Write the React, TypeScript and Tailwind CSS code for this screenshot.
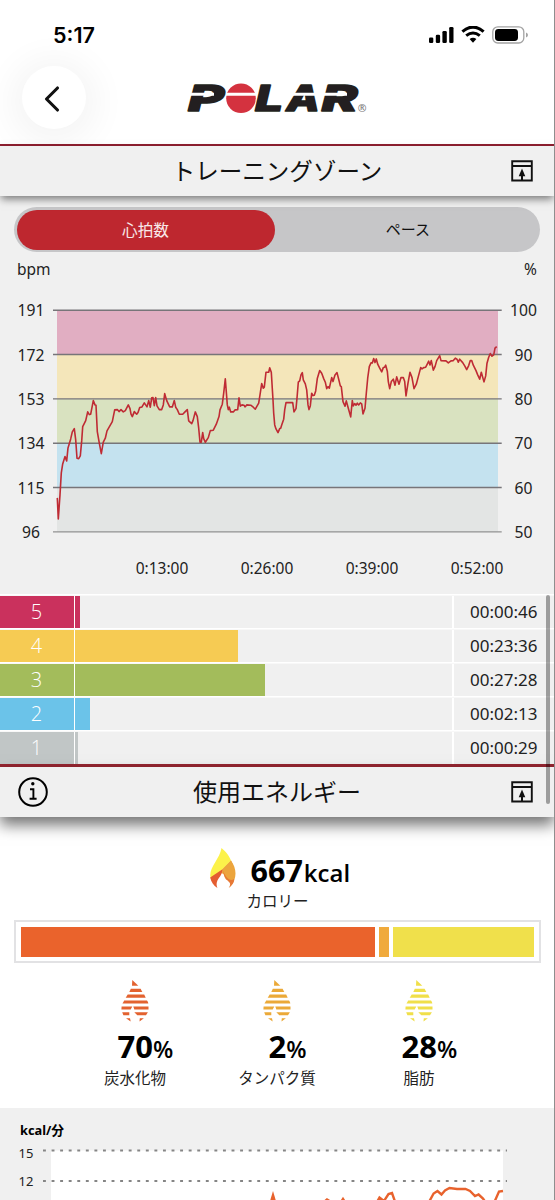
import * as React from "react"
import { ChevronLeft } from "lucide-react"

const HR_LINE =
    "57.3,498 58.3,519 60,495 61.3,473 62.7,464 65,456.7 66.7,461 68,448 70.7,439 72.3,432 74.3,428.7 75.7,440 77,458.3 78.7,458.7 80.3,456 81.7,441 82.7,426.7 85.7,420.7 87.7,412 89.3,414.7 90.7,414.3 93.3,400.7 95,405 96,405.3 97.3,431.7 99.3,443.3 101.3,453.7 103.3,442.3 105.3,438.3 107,431 112.3,421.7 114.7,410 117.3,409.7 119,411.7 121,409.7 123.3,412 125.3,410.7 128.3,405 130,408.7 131,414.3 132.3,416.7 134.3,411.7 136.7,414.3 138,412.7 139.7,407.7 142,407 144.3,403 147,407 148.7,400.7 150.3,407.3 151.7,398 153,397.7 154.3,405.7 155.7,397.7 157,406 159.3,409.7 161.7,409.7 163.3,405 164.7,393.7 166.7,400.7 169.7,407 172.3,407 174.3,400.7 175.7,407.3 177.3,409.7 179.3,414.3 182.7,414.3 185,412 187.3,409.7 188.7,421 191.7,423.7 193,420.7 195.3,412 197.3,416.7 198.7,428.3 200,442.3 201.3,442.3 202.7,432.7 203.7,438.7 205.3,442.3 208.3,437.7 210.3,430.7 213.3,430.3 216.3,424.3 219,416.7 220,410 222.3,404.3 223.7,393.3 225.3,379 227.3,405 228.3,409.7 229.3,407.3 230.7,412 233.3,412 235,410 237.7,409.7 239,398 240.3,406.3 242,405 244,405.3 245,407 246.7,405 250.7,405.3 253.3,407.3 255.3,409.3 258.7,403.3 260,395 261.7,383.7 263.3,388.3 264.3,387.3 266,372.3 268.7,372.3 269.7,368 271.3,372.3 273,400 273.7,413.3 274.7,425 276,429 278,432.7 279.7,428.7 280.7,428.3 281.7,425 283.7,419.3 284.7,410 286,402.7 292.7,402.7 294,412 296,408.7 297,398.3 298.3,382.3 299.7,381 301,375 302.3,372.7 303.3,380 305.3,384 306.7,390 308,405 309,409.7 310.3,406 311.7,393.3 313,395.7 314.3,395.3 315.7,391 317.3,378.7 319.7,370.7 321.7,373.3 323.7,378.7 325.3,382.3 326.7,388.7 328,386.7 329.3,388.3 331.7,377.7 333,381.7 335,375 337,372.7 338.7,379.3 340.3,386 341.3,386.7 343,401.7 345,406.3 346.3,401 348.3,408.3 350.7,417 352.3,400.7 353.3,406 354.7,403.7 356,405.3 357.3,403.3 358.7,405 360.3,403 361.7,404 363,414 365,408.3 366.3,393.3 367.7,378.3 369.3,366.7 371,363 372.3,363 373.7,358.7 375,362.7 376.3,359 377.7,364.3 379.7,368.3 381.7,372 383.3,367.7 384.7,367.3 385.7,365.3 387.3,371.3 388.3,381.7 389.7,388.7 391.3,381.7 393.3,379.3 395,385.3 396.7,377 399,384.3 401,377.7 403.3,377.7 404.7,381.7 406,396 408,383.3 410,372.3 412,377.7 414,388.7 416.3,384.3 418.3,376.7 420.7,367.7 422,369 423.7,367.7 425.7,367.3 427,364.7 428.7,361.3 430,365 431.3,360.7 433.3,370.3 435,366.7 436.7,360.7 439.7,355.7 441,360.7 446,361 448.3,363 451,361 453.3,360.7 455.3,358.3 457,359.3 458.3,362.3 459.7,359.3 462.7,362.7 464.7,366 466.7,369.7 468.7,365.7 470.3,360.7 471.7,360.7 473.3,365.3 476,370.7 477.7,375 479.7,379.3 481.3,372.3 484,382 485.7,376 487,363.3 488.7,357.3 490.3,353.7 492,356.3 493.7,355 495,348.3 496.7,346.7"

const KCAL_LINE =
    "429,1202 433.6,1193.5 437.5,1191 441.5,1194.5 445,1190.5 449.5,1188 457,1189 465.5,1189 470,1191 475,1196 478.6,1194.5 483,1198.5 486,1203 494,1203 499,1191.5 503,1191"

const BANDS = ["#e1aec2", "#f4e6ba", "#d9e2c0", "#c4e2ef", "#e3e5e4"]

const ZONES = [
    { zone: 5, time: "00:00:46", width: 5, bg: "bg-[#ca315d]" },
    { zone: 4, time: "00:23:36", width: 163, bg: "bg-[#f6cb53]" },
    { zone: 3, time: "00:27:28", width: 190, bg: "bg-[#a3bc5b]" },
    { zone: 2, time: "00:02:13", width: 15, bg: "bg-[#6bc3e9]" },
    { zone: 1, time: "00:00:29", width: 3, bg: "bg-[#c1c6c6]" },
]

const NUTRIENTS = [
    { label: "炭水化物", value: 70, color: "#e3622f" },
    { label: "タンパク質", value: 2, color: "#eba938" },
    { label: "脂肪", value: 28, color: "#f0df49" },
]

function StatusBar() {
    return (
        <div className="flex h-[66px] items-start justify-between pt-[22px] pr-[26px] pl-[53px]">
            <span className="font-['Inter'] text-[21.500px] leading-[26px] font-semibold text-black">5:17</span>
            <svg width="99" height="18" viewBox="0 0 99 18" className="mt-1">
                <rect x="0" y="11.4" width="4.3" height="5.6" rx="1.3" />
                <rect x="6.8" y="8.7" width="4.3" height="8.3" rx="1.3" />
                <rect x="13.4" y="5" width="4.4" height="12" rx="1.3" />
                <rect x="20.2" y="1" width="4.3" height="16" rx="1.3" />
                <path d="M33.4 5.6 Q44 -3.4 54.6 5.6" fill="none" stroke="#000" strokeWidth="3.1" />
                <path d="M37.2 9.7 Q44 4.2 50.8 9.7" fill="none" stroke="#000" strokeWidth="3" />
                <path d="M40.6 13 Q44 10.4 47.4 13 L44 16.7 Z" />
                <rect x="63.8" y="0.8" width="31" height="16.2" rx="5" fill="none" stroke="#a3a3a3" strokeWidth="1.3" />
                <rect x="66" y="3" width="23" height="12" rx="3.4" />
                <path d="M97 6.5 Q99 7.4 99 9 Q99 10.6 97 11.4 Z" fill="#a3a3a3" />
            </svg>
        </div>
    )
}

function PolarLogo() {
    const letters = {
        fontFamily: "Inter",
        fontWeight: 800,
        fontStyle: "italic",
        fontSize: 36,
        fill: "#231f20",
        stroke: "#231f20",
        strokeWidth: 1.6,
        strokeLinejoin: "round" as const,
        lengthAdjust: "spacingAndGlyphs",
    }
    return (
        <svg width="190" height="60" viewBox="182 68 190 60">
            <text x="188" y="111" textLength="36" {...letters}>P</text>
            <text x="255" y="111" textLength="28" {...letters}>L</text>
            <text x="286.500" y="111" textLength="33" {...letters}>A</text>
            <text x="321.500" y="111" textLength="36" {...letters}>R</text>
            <circle cx="241" cy="98.3" r="14.8" fill="#d4323f" />
            <path d="M189 94.2 H214 M226 94.2 H257 M286 94.2 H319 M322 94.2 H347" stroke="#fff" strokeWidth="3" />
            <text x="357.8" y="111.6" fontSize="10.5" fontFamily="Noto Sans" fill="#777">®</text>
        </svg>
    )
}

function PopupIcon() {
    return (
        <svg width="22" height="22" viewBox="0 0 22 22" fill="none" stroke="#111" className="absolute right-[21px]">
            <path d="M1.2 1.2 H20.8 V20.500 H1.2 Z M1.2 6 H20.8" strokeWidth="1.9" />
            <path d="M11 20 V14" strokeWidth="2" />
            <path d="M11 8.4 L14.3 16.2 H7.7 Z" fill="#111" stroke="none" />
        </svg>
    )
}

function InfoIcon() {
    return (
        <svg width="30" height="30" viewBox="0 0 30 30" fill="none" stroke="#000" strokeWidth="2" className="absolute left-[18px]">
            <circle cx="15" cy="15" r="13.8" />
            <path d="M12 12.3 H15.4 V21.6 M11.6 21.8 H18.6" strokeWidth="1.9" />
            <circle cx="14.8" cy="6.8" r="1.7" fill="#000" stroke="none" />
        </svg>
    )
}

function HeartRateChart() {
    return (
        <div className="flex h-[266px] text-[15.7px] text-[#222]">
            <div className="flex w-[53px] flex-col pt-px pl-[17px]">
                {[191, 172, 153, 134, 115, 96].map((v) => (
                    <span key={v} className="flex h-[44.3px] w-7 shrink-0 items-center justify-center">{v}</span>
                ))}
            </div>
            <svg width="449" height="266" viewBox="53 288.1 449 266" fill="none">
                {BANDS.map((color, i) => (
                    <rect key={color} x="57" y={310.3 + i * 44.34} width="441" height="44.34" fill={color} />
                ))}
                {[0, 1, 2, 3, 4, 5].map((i) => (
                    <path key={i} d={`M53 ${310.3 + i * 44.34} H501.7`} stroke={i === 5 ? "#929292" : "#777579"} strokeWidth="1.4" />
                ))}
                <polyline points={HR_LINE} stroke="#bf2b34" strokeWidth="1.6" strokeLinejoin="round" />
            </svg>
            <div className="flex flex-col pt-px pl-2">
                {[100, 90, 80, 70, 60, 50].map((v) => (
                    <span key={v} className="flex h-[44.3px] w-[27px] shrink-0 items-center justify-center">{v}</span>
                ))}
            </div>
        </div>
    )
}

function ZoneRow({ zone, time, width, bg }: (typeof ZONES)[0]) {
    return (
        <div className="flex h-[34.1px] pt-[1.5px] text-[#222] shadow-[inset_0_1.5px_0_#fff]">
            <div className={`flex w-[73.7px] items-center justify-center text-[20px] text-white ${bg}`}>
                <span className="pr-px font-['Open_Sans'] font-light">{zone}</span>
            </div>
            <div className="flex w-[380px] border-r-2 border-white bg-transparent pl-[1.3px] shadow-[inset_1.500px_0_0_#fff]">
                <div className={bg} style={{ width }} />
            </div>
            <div className="flex flex-1 items-center justify-end pr-[16.500px] text-[17px]">{time}</div>
        </div>
    )
}

function Flame() {
    return (
        <svg width="28" height="42" viewBox="0 0 28 42">
            <path d="M12.5 0 C18 5 20 7.500 22 12.500 L5.500 29.500 L2 31.500 C-2 21 10.500 12 12.500 0 Z" fill="#fcf24a" />
            <path d="M22 12.500 C28 21 28.500 31 20.500 39.800 C24 34 20 31 17.500 32 C14.500 29 15 24 13.500 21.200 Z" fill="#eca53d" />
            <path d="M22 12.500 L13.500 21.200 L8 27 C14 23 15 26 18 31 H25 Q27 22 22 12.500 Z" fill="#eca53d" />
            <path d="M13.500 21.200 L1.200 29.600 C2.200 34 4.500 38 8.400 40 C6.500 35 8.500 32 11 28.500 C13 26 13 23 13.500 21.200 Z" fill="#e45d31" />
            <path d="M13.500 21.200 C15 26 14.500 29 20.500 34.500 C22 36.500 20.500 38.500 19.700 40 C25 36 25.500 32 25 31 C21 34 16 29 13.500 21.200 Z" fill="#e77835" />
        </svg>
    )
}

// leaf-like flame cut into horizontal stripes
function StripedFlame({ color }: { color: string }) {
    return (
        <svg width="28" height="42" viewBox="0 0 28 42" fill={color}>
            <path d="M11.300 0 L17.300 5.800 H11 Z" />
            <path d="M9.800 8.700 H19.600 L21.300 11.900 H8.300 Z" />
            <path d="M6.700 14.500 H23.200 L24.700 17.700 H4.700 Z" />
            <path d="M3.200 20.400 H26 Q27.200 22 27.300 23.600 H1.500 Z" />
            <path d="M0.600 26.500 H11.300 L9.700 29.600 H0.400 Z M12.300 26.500 H27.500 V29.600 H13.300 Z" />
            <path d="M1.200 32.200 H8.300 V35.300 H2.400 Z M13.300 32.200 H26.900 L25 35.300 H16.300 Z" />
            <path d="M5 38.200 H9 L9.700 41.500 Z M18.800 38.200 H22.900 L18.500 41.500 Z" />
        </svg>
    )
}

function EnergySection() {
    return (
        <section className="h-[291.500px] bg-white">
            <div className="flex h-[103.5px] items-start pt-[31px] pl-[208.500px]">
                <Flame />
                <div className="-ml-[9px] flex w-[140px] flex-col pl-[23px]">
                    <div className="h-[44px] leading-[44px] whitespace-nowrap text-black">
                        <span className="text-[30.5px] font-bold">667</span>
                        <span className="ml-px font-['Open_Sans'] text-[24px] font-semibold">kcal</span>
                    </div>
                    <span className="-ml-1 text-[15.5px] leading-[18px] text-[#222]">カロリー</span>
                </div>
            </div>
            <div className="mx-[14px] flex h-[43px] w-[526.500px] gap-[3.5px] border-2 border-[#e2e2e4] p-[4.500px]">
                <div className="w-[354.500px] bg-[#ea632c]" />
                <div className="w-[10.500px] bg-[#f0aa3c]" />
                <div className="flex-1 bg-[#f0e04b]" />
            </div>
            <div className="flex pt-[17px] pl-[64px]">
                {NUTRIENTS.map((n) => (
                    <div key={n.label} className="flex w-[142px] flex-col items-center">
                        <StripedFlame color={n.color} />
                        <div className="h-[47px] pl-[21px] leading-[49px] text-black">
                            <span className="text-[31px] font-bold">{n.value}</span>
                            <span className="font-['Open_Sans'] text-[23.500px] font-semibold">%</span>
                        </div>
                        <span className="text-[15.5px] leading-[18px] text-[#222]">{n.label}</span>
                    </div>
                ))}
            </div>
        </section>
    )
}

function EnergyChart() {
    return (
        <section className="h-[91.500px] overflow-hidden bg-[#f0f0f0] pt-3">
            <p className="pl-5 text-[12.800px] leading-5 font-bold text-black">kcal/分</p>
            <div className="flex">
                <div className="flex w-[43px] flex-col pl-[18.500px] text-[13px] text-[#222]">
                    <span className="flex h-[27px] items-center">15</span>
                    <span className="flex h-[30px] items-center">12</span>
                </div>
                <svg width="465" height="60" viewBox="43 1140 465 60" fill="none">
                    <rect x="51" y="1150.500" width="452" height="60" fill="#fff" />
                    <path d="M43 1150.500 H507 M43 1181 H507" stroke="#858585" strokeWidth="1.900" strokeDasharray="2.900 5.670" />
                    <path d="M270 1201 L273 1191 L276 1201 Z" fill="#e8622d" />
                    <g stroke="#e8622d" strokeWidth="2.400">
                        <polyline points="324,1202 327,1199.500 331,1202" />
                        <polyline points="341,1202 343,1199 345,1202" />
                        <polyline points="377,1202 379.500,1197.500 384,1201 388.500,1194 392,1193 395.500,1203" />
                        <polyline points={KCAL_LINE} />
                    </g>
                </svg>
            </div>
        </section>
    )
}

export default function App() {
    return (
        <div className="relative h-[1200px] w-[555px] overflow-hidden border-r border-[#8e8e8e] bg-[#f0f0f0] font-['Noto_Sans','Noto_Sans_CJK_JP',sans-serif]">
            <header className="h-[143.500px] bg-white">
                <StatusBar />
                <div className="flex items-center pl-[22px]">
                    <button className="relative flex h-[63px] w-[64px] items-center justify-center rounded-full bg-white shadow-[0_4px_34px_12px_rgba(0,0,0,0.045)]">
                        <ChevronLeft className="mt-0.5 mr-1 h-[44px] w-[44px] text-[#111]" strokeWidth={1.7} />
                    </button>
                    <div className="ml-[95.500px]">
                        <PolarLogo />
                    </div>
                </div>
            </header>

            {/* Training zones */}
            <div className="relative z-10 flex h-[52px] items-center justify-center border-t-[2.500px] border-[#8f1f30] bg-[#f0f0f0] text-[23.500px] text-[#111]">
                <div className="absolute inset-0 -z-10 shadow-[0_4px_8px_-1px_rgba(0,0,0,0.5)]" />
                <h2 className="pt-0.5">トレーニングゾーン</h2>
                <PopupIcon />
            </div>

            <div className="mt-[11.500px] ml-[14px] flex h-[45px] w-[526px] items-center rounded-full bg-[#c6c6c8] px-[2.500px] text-[15.7px]">
                <div className="flex h-[40px] w-[258px] items-center justify-center rounded-full bg-[#be272f] pt-0.5 text-white/90">心拍数</div>
                <div className="flex flex-1 items-center justify-center pl-1 text-[15px] text-[#111]">ペース</div>
            </div>

            <div className="flex h-[36px] justify-between pt-[5px] pr-[17px] pl-[17px] text-[15.500px] leading-6 text-[#222]">
                <span>bpm</span>
                <span>%</span>
            </div>
            <HeartRateChart />
            <div className="flex h-[40px] pl-[109.500px] text-[15.5px] leading-7 text-[#222]">
                {["0:13:00", "0:26:00", "0:39:00", "0:52:00"].map((t) => (
                    <span key={t} className="w-[105px] text-center">{t}</span>
                ))}
            </div>

            <div className="h-[170px] overflow-hidden">
                {ZONES.map((z) => (
                    <ZoneRow key={z.zone} {...z} />
                ))}
            </div>

            {/* Energy used */}
            <div className="relative z-10 flex h-[52.500px] items-center justify-center border-t-[3px] border-[#952530] bg-[#f0f0f0] text-[24px] text-[#111]">
                <div className="absolute inset-0 -z-10 shadow-[0_8px_14px_0px_rgba(0,0,0,0.55)]" />
                <InfoIcon />
                <h2>使用エネルギー</h2>
                <PopupIcon />
            </div>
            <EnergySection />
            <EnergyChart />

            {/* scroll thumb */}
            <div className="absolute top-[595px] right-[4px] z-20 h-[209px] w-[4.500px] rounded-full bg-black/35" />
        </div>
    )
}
